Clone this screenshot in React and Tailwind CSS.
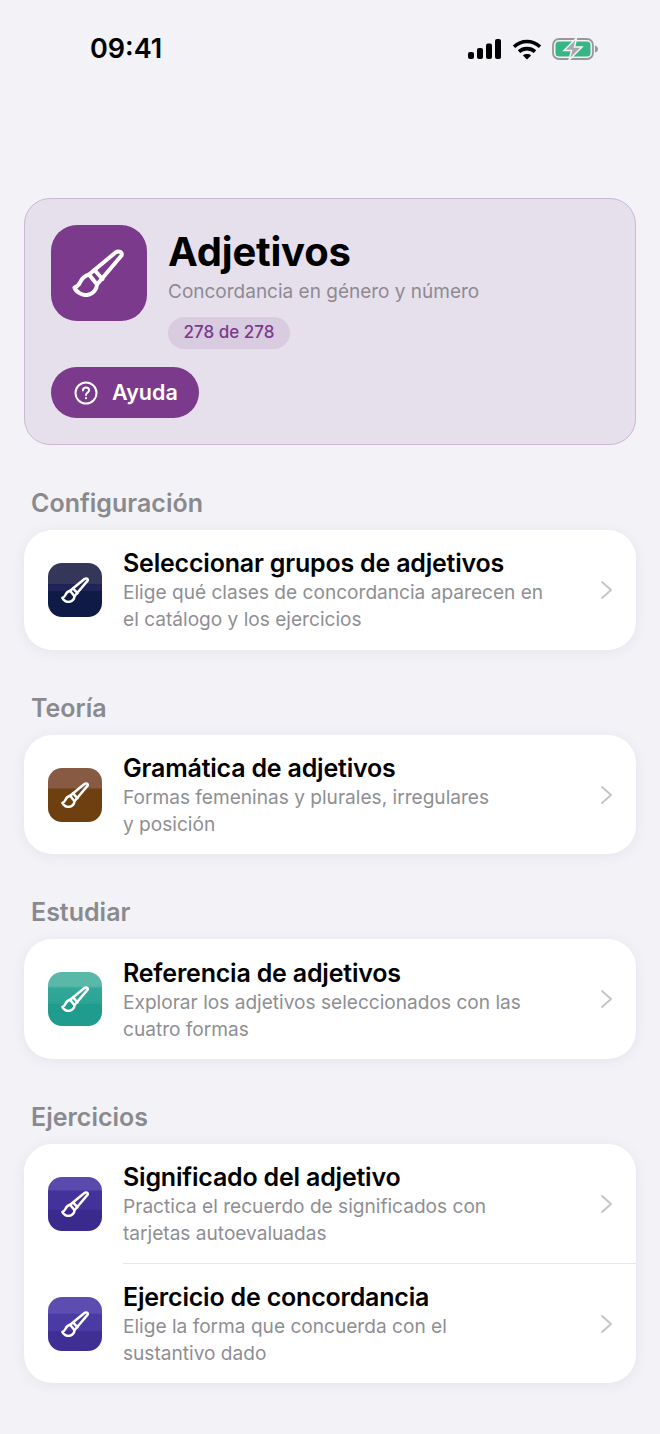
function Brush({ className, width = 4 }) {
  return (
    <svg viewBox="0 0 52 48" fill="none" stroke="white" strokeWidth={width} strokeLinejoin="round" strokeLinecap="round" className={className}>
      <path d="M43.5 3.5 L17 25.5 C12 27 9.5 30 8 33.5 C7 36 5 37.5 2.5 38.5 C4 43 10 46.5 15 46 C21 45.5 25 40 25 35.5 L49.5 6.5 C51 3 46.5 1.5 43.5 3.5 Z" />
      <path d="M22.5 21 L30.5 30" />
      <path d="M17 25.5 L25 35.5" />
    </svg>
  );
}

function Tile({ bg }) {
  return (
    <div className={`w-[54px] h-[54px] shrink-0 rounded-[14px] flex items-center justify-center ${bg}`}>
      <Brush className="w-[28px] h-[26px]" width={4.6} />
    </div>
  );
}

function Chevron() {
  return (
    <svg viewBox="0 0 11 18" className="w-[11px] h-[18px] shrink-0" fill="none" stroke="#c4c4c7" strokeWidth="1.8" strokeLinecap="round" strokeLinejoin="round">
      <path d="M1 1 L10 9 L1 17" />
    </svg>
  );
}

function Row({ bg, title, lines, divider }) {
  return (
    <div className="relative flex items-center h-[119.7px] pl-6 pr-6">
      <Tile bg={bg} />
      <div className="ml-[21px] flex-1 min-w-0 pt-[2px]">
        <p className="text-[25px] leading-[30px] font-semibold text-black tracking-[-0.2px]">{title}</p>
        <p className="mt-[1px] text-[19.1px] leading-[27px] text-[#8e8e93]">{lines[0]}<br />{lines[1]}</p>
      </div>
      <Chevron />
      {divider && <div className="absolute left-[99px] right-0 bottom-0 h-px bg-[#e5e5ea]" />}
    </div>
  );
}

function Section({ label, children }) {
  return (
    <section className="mt-[43px]">
      <h2 className="pl-[7px] text-[25px] leading-[30px] font-semibold text-[#8a8a8e]">{label}</h2>
      <div className="mt-[12px] bg-white rounded-[28px] shadow-[0_2px_14px_rgba(60,50,100,0.07)]">{children}</div>
    </section>
  );
}

export default function App() {
  return (
    <div className="w-[660px] h-[1434px] overflow-hidden bg-[#f2f2f7] font-['Inter',sans-serif]">
      <div className="h-[198px] px-[90px] pt-[31px] pr-[62px] flex items-start justify-between">
        <span className="text-[27px] leading-[36px] font-semibold text-black">09:41</span>
        <div className="flex items-center gap-[10.5px] pt-[7px]">
          <svg viewBox="0 0 33 20" className="w-[33px] h-[20px]" fill="black">
            <rect x="0" y="13" width="6" height="7" rx="2" />
            <rect x="9" y="9" width="6" height="11" rx="2" />
            <rect x="18" y="4.5" width="6" height="15.5" rx="2" />
            <rect x="27" y="0" width="6" height="20" rx="2" />
          </svg>
          <svg viewBox="0 0 30 21" className="w-[30px] h-[21px]" fill="none" stroke="black" strokeWidth="3.6">
            <path d="M2 7.8 C9.5 0.8 20.5 0.8 28 7.8" />
            <path d="M7 12.6 C11.5 8.6 18.5 8.6 23 12.6" />
            <path d="M15 20.5 L10.9 16.4 C13 14.6 17 14.6 19.1 16.4 Z" fill="black" stroke="none" />
          </svg>
          <svg viewBox="0 0 46 22" className="w-[46px] h-[22px]">
            <rect x="1" y="1" width="40" height="20" rx="6" fill="none" stroke="#98989c" strokeWidth="1.8" />
            <rect x="3.5" y="3.5" width="35" height="15" rx="3.5" fill="#38b584" />
            <path d="M43 7.5 C45 8 46 9.5 46 11 C46 12.5 45 14 43 14.5 Z" fill="#98989c" />
            <path d="M24.5 0 L12 12.5 L19.5 12.5 L17 22 L30 9 L22.5 9 Z" fill="#a9a9ad" stroke="#f2f2f7" strokeWidth="1.5" />
          </svg>
        </div>
      </div>

      <div className="px-6">
        <div className="h-[247px] rounded-[26px] border border-[#ccb8d6] bg-[#e6e0ec] pl-[26px] pt-[26px]">
          <div className="flex">
            <div className="w-[96px] h-[96px] rounded-[26px] bg-[#7b3a8b] flex items-center justify-center">
              <Brush className="w-[52px] h-[48px] -translate-x-px" />
            </div>
            <div className="ml-[21px] pt-[2px]">
              <h1 className="text-[40px] leading-[50px] font-bold text-black tracking-[-0.2px]">Adjetivos</h1>
              <p className="mt-[2px] text-[19px] leading-[26px] text-[#8e8a92]">Concordancia en género y número</p>
              <span className="mt-[12px] inline-flex items-center h-[32px] w-[122px] justify-center rounded-full bg-[#d9cbe0] text-[17px] font-medium text-[#7b3a8b]">278 de 278</span>
            </div>
          </div>
          <button className="mt-[18px] flex items-center h-[51px] w-[148px] rounded-full bg-[#7b3a8b] pl-[23px] text-white">
            <svg viewBox="0 0 24 24" className="w-[24px] h-[24px]" fill="none" stroke="white" strokeWidth="2">
              <circle cx="12" cy="12" r="10.5" />
              <path d="M8.9 9.4 C9 7.5 10.4 6.5 12 6.5 C13.8 6.5 15.1 7.6 15.1 9.2 C15.1 11.4 12 11.5 12 14" strokeLinecap="round" />
              <circle cx="12" cy="17.2" r="1.1" fill="white" stroke="none" />
            </svg>
            <span className="ml-[14px] text-[21.5px] font-semibold">Ayuda</span>
          </button>
        </div>

        <Section label="Configuración">
          <Row bg="bg-[linear-gradient(#34365a_0%,#34365a_38%,#1f2358_38%,#1f2358_52%,#101a47_52%,#101a47_100%)]" title="Seleccionar grupos de adjetivos" lines={['Elige qué clases de concordancia aparecen en', 'el catálogo y los ejercicios']} />
        </Section>
        <Section label="Teoría">
          <Row bg="bg-[linear-gradient(#875a44_0%,#875a44_36%,#6e400f_40%,#6e400f_100%)]" title="Gramática de adjetivos" lines={['Formas femeninas y plurales, irregulares', 'y posición']} />
        </Section>
        <Section label="Estudiar">
          <Row bg="bg-[linear-gradient(#5ab8a8_0%,#5ab8a8_26%,#33a899_30%,#2ba394_58%,#1f9c8d_60%,#1f9c8d_100%)]" title="Referencia de adjetivos" lines={['Explorar los adjetivos seleccionados con las', 'cuatro formas']} />
        </Section>
        <Section label="Ejercicios">
          <Row divider bg="bg-[linear-gradient(#5a4aae_0%,#5a4aae_24%,#42329a_26%,#42329a_60%,#3a2a8e_62%,#3a2a8e_100%)]" title="Significado del adjetivo" lines={['Practica el recuerdo de significados con', 'tarjetas autoevaluadas']} />
          <Row bg="bg-[linear-gradient(#5d4db0_0%,#5d4db0_30%,#4a3aa4_32%,#4a3aa4_62%,#3f2f95_64%,#3f2f95_100%)]" title="Ejercicio de concordancia" lines={['Elige la forma que concuerda con el', 'sustantivo dado']} />
        </Section>
      </div>
    </div>
  );
}
